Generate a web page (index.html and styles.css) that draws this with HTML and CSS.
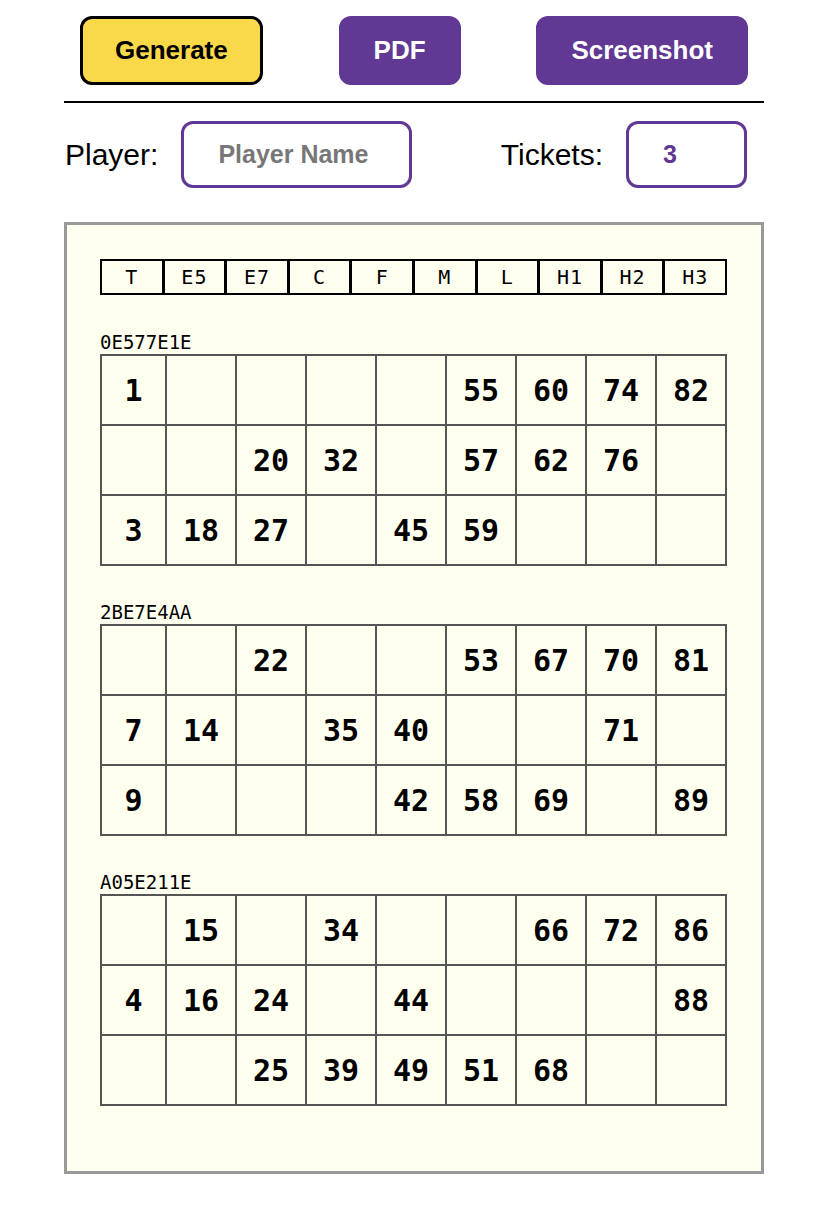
FILE: index.html
```html
<!DOCTYPE html>
<html>
  <head>
    <title>Bingo Tickets</title>
    <link rel="stylesheet" href="styles.css">
  </head>
  <body>
    <div class="page">
      <div class="toolbar">
        <button class="btn btn-generate">Generate</button>
        <button class="btn btn-purple">PDF</button>
        <button class="btn btn-purple">Screenshot</button>
      </div>
      <hr class="divider">
      <div class="settings">
        <div class="field">
          <label for="player">Player:</label>
          <input id="player" class="input input-player" type="text" placeholder="Player Name">
        </div>
        <div class="field">
          <label for="tickets">Tickets:</label>
          <input id="tickets" class="input input-tickets" type="text" value="3">
        </div>
      </div>

      <div class="sheet">
        <div class="legend">
          <div>T</div><div>E5</div><div>E7</div><div>C</div><div>F</div>
          <div>M</div><div>L</div><div>H1</div><div>H2</div><div>H3</div>
        </div>

        <div class="ticket">
          <div class="ticket-id">0E577E1E</div>
          <div class="grid">
            <div>1</div><div></div><div></div><div></div><div></div><div>55</div><div>60</div><div>74</div><div>82</div>
            <div></div><div></div><div>20</div><div>32</div><div></div><div>57</div><div>62</div><div>76</div><div></div>
            <div>3</div><div>18</div><div>27</div><div></div><div>45</div><div>59</div><div></div><div></div><div></div>
          </div>
        </div>

        <div class="ticket">
          <div class="ticket-id">2BE7E4AA</div>
          <div class="grid">
            <div></div><div></div><div>22</div><div></div><div></div><div>53</div><div>67</div><div>70</div><div>81</div>
            <div>7</div><div>14</div><div></div><div>35</div><div>40</div><div></div><div></div><div>71</div><div></div>
            <div>9</div><div></div><div></div><div></div><div>42</div><div>58</div><div>69</div><div></div><div>89</div>
          </div>
        </div>

        <div class="ticket">
          <div class="ticket-id">A05E211E</div>
          <div class="grid">
            <div></div><div>15</div><div></div><div>34</div><div></div><div></div><div>66</div><div>72</div><div>86</div>
            <div>4</div><div>16</div><div>24</div><div></div><div>44</div><div></div><div></div><div></div><div>88</div>
            <div></div><div></div><div>25</div><div>39</div><div>49</div><div>51</div><div>68</div><div></div><div></div>
          </div>
        </div>
      </div>
    </div>
  </body>
</html>
```

FILE: styles.css
```css
/* page frame */
body {
  margin: 0;
  background: #fff;
  font-family: "Liberation Sans", Arial, sans-serif;
  color: #000;
}
.page {
  width: 700px;
  margin: 0 0 0 64px;
}

/* top buttons */
.toolbar {
  display: flex;
  justify-content: space-between;
  padding: 16px 16px 0;
}
.btn {
  box-sizing: border-box;
  height: 69px;
  padding: 0 32px;
  border-radius: 12px;
  font-family: "Liberation Sans", Arial, sans-serif;
  font-size: 26px;
  font-weight: bold;
  cursor: pointer;
}
.btn-generate {
  background-color: #f9d94a;
  border: 3px solid #000;
  color: #000;
}
.btn-purple {
  background-color: #613893;
  border: 3px solid #613893;
  color: #fff;
}
.divider {
  margin: 16px 0 0;
  border: none;
  border-top: 2px solid #000;
}

/* player / tickets row */
.settings {
  display: flex;
  justify-content: space-between;
  align-items: center;
  margin-top: 18px;
  padding: 0 17px 0 1px;
}
.field {
  display: flex;
  align-items: center;
  gap: 23px;
}
.field label {
  font-size: 30px;
}
.input {
  box-sizing: border-box;
  height: 67px;
  padding: 0 0 0 34px;
  border: 3px solid #613893;
  border-radius: 12px;
  background: #fff;
  font-family: "Liberation Sans", Arial, sans-serif;
  font-size: 25px;
  font-weight: bold;
  color: #613893;
  outline: none;
}
.input::placeholder {
  color: #777;
}
.input-player {
  width: 231px;
}
.input-tickets {
  width: 121px;
}

/* ticket sheet */
.sheet {
  margin-top: 34px;
  border: 3px solid #999;
  background-color: #fffff0;
  padding: 34px 34px 65px 33px;
}
.legend {
  display: grid;
  grid-template-columns: repeat(10, 1fr);
  gap: 3px;
  border: 2px solid #000;
  background-color: #000;
}
.legend div {
  height: 32px;
  background-color: #fffff0;
  display: flex;
  align-items: center;
  justify-content: center;
  font-family: "DejaVu Sans Mono", monospace;
  font-size: 20px;
  letter-spacing: 1px;
}
.ticket {
  margin-top: 35px;
}
.ticket + .ticket {
  margin-top: 34px;
}
.ticket-id {
  font-family: "DejaVu Sans Mono", monospace;
  font-size: 19px;
  line-height: 24px;
}
.grid {
  display: grid;
  grid-template-columns: 65px repeat(8, 1fr);
  border-top: 2px solid #555;
  border-left: 2px solid #555;
}
.grid div {
  box-sizing: border-box;
  height: 70px;
  border-right: 2px solid #555;
  border-bottom: 2px solid #555;
  display: flex;
  align-items: center;
  justify-content: center;
  font-family: "DejaVu Sans Mono", monospace;
  font-size: 30px;
  font-weight: bold;
}
```
